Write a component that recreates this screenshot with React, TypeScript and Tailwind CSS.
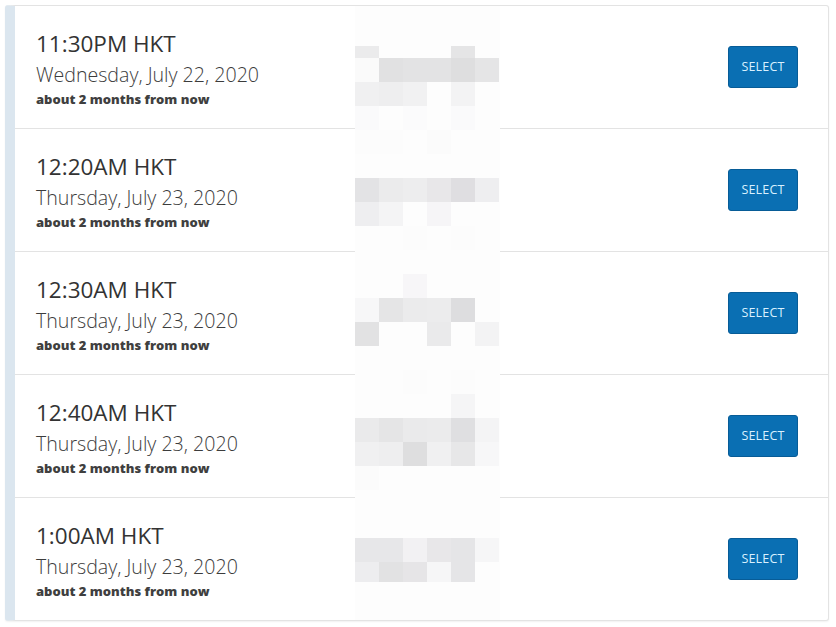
const slots = [
    { time: "11:30PM HKT", date: "Wednesday, July 22, 2020" },
    { time: "12:20AM HKT", date: "Thursday, July 23, 2020" },
    { time: "12:30AM HKT", date: "Thursday, July 23, 2020" },
    { time: "12:40AM HKT", date: "Thursday, July 23, 2020" },
    { time: "1:00AM HKT", date: "Thursday, July 23, 2020" },
];

// pixelated (blurred out) column: [col, pageY, height, colour]
const cells: [number, number, number, string][] = [
    [0, 46, 12, "#ebebec"], [4, 46, 12, "#e5e5e6"],
    [0, 58, 24, "#fafafa"], [1, 58, 24, "#e1e1e2"], [2, 58, 24, "#e3e3e4"], [3, 58, 24, "#e3e3e4"], [4, 58, 24, "#dededf"], [5, 58, 24, "#e5e5e6"],
    [0, 82, 24, "#f0f0f1"], [1, 82, 24, "#eeeeef"], [2, 82, 24, "#f1f1f2"], [4, 82, 24, "#f3f3f4"],
    [0, 106, 24, "#fafafb"], [2, 106, 24, "#fbfbfc"], [4, 106, 24, "#fafafb"],
    [0, 130, 24, "#fcfcfc"], [1, 130, 24, "#fcfcfc"], [3, 130, 24, "#fbfbfb"],
    [0, 178, 24, "#e3e3e5"], [1, 178, 24, "#ebebec"], [2, 178, 24, "#ededee"], [3, 178, 24, "#e8e7e9"], [4, 178, 24, "#dfdee1"], [5, 178, 24, "#eeeef0"],
    [0, 202, 24, "#eeeef0"], [1, 202, 24, "#f4f4f5"], [3, 202, 24, "#f6f5f7"],
    [2, 226, 24, "#fcfcfc"], [4, 226, 24, "#fcfcfc"],
    [2, 274, 24, "#f7f6f8"],
    [0, 298, 24, "#f7f7f8"], [1, 298, 24, "#e5e5e6"], [2, 298, 24, "#ebebec"], [3, 298, 24, "#ececed"], [4, 298, 24, "#dddddf"],
    [0, 322, 24, "#e2e2e3"], [3, 322, 24, "#eaeaeb"], [5, 322, 24, "#f3f3f4"],
    [2, 370, 24, "#fcfcfc"], [4, 370, 24, "#fcfcfc"],
    [4, 394, 24, "#f5f5f6"],
    [0, 418, 24, "#eaeaeb"], [1, 418, 24, "#e5e5e6"], [2, 418, 24, "#eaeaeb"], [3, 418, 24, "#ebebec"], [4, 418, 24, "#dfdfe1"], [5, 418, 24, "#f4f4f5"],
    [0, 442, 24, "#f0f0f1"], [1, 442, 24, "#eeeeef"], [2, 442, 24, "#dededf"], [3, 442, 24, "#f0f0f1"], [4, 442, 24, "#e7e7e8"], [5, 442, 24, "#f7f7f8"],
    [0, 466, 24, "#fbfbfb"],
    [0, 538, 24, "#e7e7e9"], [1, 538, 24, "#e7e7e9"], [2, 538, 24, "#f2f1f3"], [3, 538, 24, "#e8e7e9"], [4, 538, 24, "#e5e5e7"], [5, 538, 24, "#f6f6f7"],
    [0, 562, 20, "#ededef"], [1, 562, 20, "#e2e2e3"], [2, 562, 20, "#e6e5e7"], [3, 562, 20, "#f6f6f7"], [4, 562, 20, "#e5e5e7"],
];

function Mosaic() {
    return (
        <svg className="absolute left-[340px] top-0" width="145" height="614" viewBox="0 0 145 614">
            <rect x="0" y="0" width="145" height="614" fill="#fdfdfd" />
            {cells.map(([c, y, h, fill], i) => (
                <rect key={i} x={c * 24} y={y - 6} width="24" height={h} fill={fill} />
            ))}
        </svg>
    );
}

export default function App() {
    return (
        <div className="bg-white w-[836px] h-[627px] p-[5px]" style={{ fontFamily: '"Open Sans", sans-serif' }}>
            <div className="relative w-[824px] border border-[#e3e3e3] border-l-[10px] border-l-[#dbe6ef] rounded-[3px] shadow-[0_1px_2px_rgba(0,0,0,0.06)] bg-white">
                {slots.map((slot, i) => (
                    <div
                        key={i}
                        className={
                            "flex items-center justify-between h-[122px] pl-[21px] pr-[30px] " +
                            (i < slots.length - 1 ? "box-content border-b border-[#e3e3e3]" : "")
                        }
                    >
                        <div className="flex flex-col pt-[2px]">
                            <span className="text-[22.5px] leading-[30px] text-[#333333]">{slot.time}</span>
                            <span className="text-[19.6px] leading-[28px] font-light text-[#3c3c3c] mt-[2px]">{slot.date}</span>
                            <span className="text-[13px] leading-[18px] font-extrabold text-[#3f3f3f] mt-[1px]">about 2 months from now</span>
                        </div>
                        <button className="w-[70px] h-[42px] bg-[#0a6fb3] border border-[#075c97] rounded-[3px] text-[12.5px] text-[#d9f1ff] tracking-[0.2px]">
                            SELECT
                        </button>
                    </div>
                ))}
                <Mosaic />
            </div>
        </div>
    );
}
